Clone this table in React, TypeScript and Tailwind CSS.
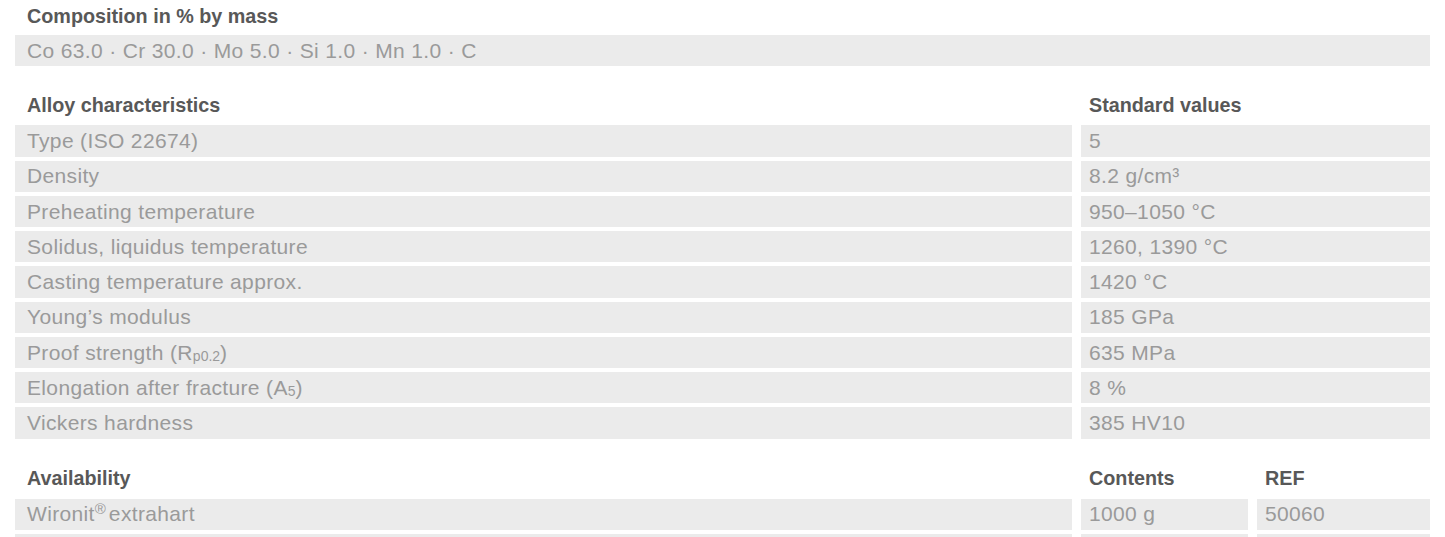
import type { ReactNode } from 'react';

const font = { fontFamily: '"Liberation Sans", Arial, sans-serif' };

// Each characteristic row: label on the left, standard value on the right.
const characteristics: { label: ReactNode; value: ReactNode }[] = [
  { label: 'Type (ISO 22674)', value: '5' },
  { label: 'Density', value: '8.2 g/cm³' },
  { label: 'Preheating temperature', value: '950–1050 °C' },
  { label: 'Solidus, liquidus temperature', value: '1260, 1390 °C' },
  { label: 'Casting temperature approx.', value: '1420 °C' },
  { label: 'Young’s modulus', value: '185 GPa' },
  {
    label: (
      <>
        Proof strength (R<sub className="text-[14px] tracking-normal">p0.2</sub>)
      </>
    ),
    value: '635 MPa',
  },
  {
    label: (
      <>
        Elongation after fracture (A<sub className="text-[14px] tracking-normal">5</sub>)
      </>
    ),
    value: '8 %',
  },
  { label: 'Vickers hardness', value: '385 HV10' },
];

function Heading({ children, className = '' }: { children?: ReactNode; className?: string }) {
  return (
    <div className={`flex h-[31px] items-center pt-[2px] text-[19.75px] font-bold text-[#585858] ${className}`}>
      {children}
    </div>
  );
}

function Cell({ children, pad = 'pl-3' }: { children?: ReactNode; pad?: string }) {
  return (
    <div
      className={`flex h-[31.25px] items-center bg-[#ebebeb] text-[21px] tracking-[0.35px] whitespace-nowrap text-[#9a9a9a] ${pad}`}
    >
      {children}
    </div>
  );
}

export default function App() {
  return (
    <div className="min-h-screen w-[1445px] bg-white px-[15px]" style={font}>
      {/* Composition */}
      <section className="flex flex-col gap-[4px]">
        <Heading className="pl-3">Composition in % by mass</Heading>
        <Cell>Co 63.0 · Cr 30.0 · Mo 5.0 · Si 1.0 · Mn 1.0 · C</Cell>
      </section>

      {/* Alloy characteristics */}
      <section className="mt-[23px] grid grid-cols-[1fr_349px] gap-x-[9px] gap-y-[4px]">
        <Heading className="mb-[1px] pl-3">Alloy characteristics</Heading>
        <Heading className="mb-[1px] pl-2">Standard values</Heading>
        {characteristics.map((row, i) => (
          <div key={i} className="contents">
            <Cell>{row.label}</Cell>
            <Cell pad="pl-2">{row.value}</Cell>
          </div>
        ))}
      </section>

      {/* Availability */}
      <section className="mt-[24px] grid grid-cols-[1fr_167px_173px] gap-x-[9px] gap-y-[4px]">
        <Heading className="mb-[1px] pl-3">Availability</Heading>
        <Heading className="mb-[1px] pl-2">Contents</Heading>
        <Heading className="mb-[1px] pl-2">REF</Heading>
        <Cell>
          Wironit
          <span className="relative -top-[5px] text-[15px] tracking-normal">®</span>
          <span className="ml-[3px]">extrahart</span>
        </Cell>
        <Cell pad="pl-2">1000 g</Cell>
        <Cell pad="pl-2">50060</Cell>
        <Cell />
        <Cell pad="pl-2" />
        <Cell pad="pl-2" />
      </section>
    </div>
  );
}
